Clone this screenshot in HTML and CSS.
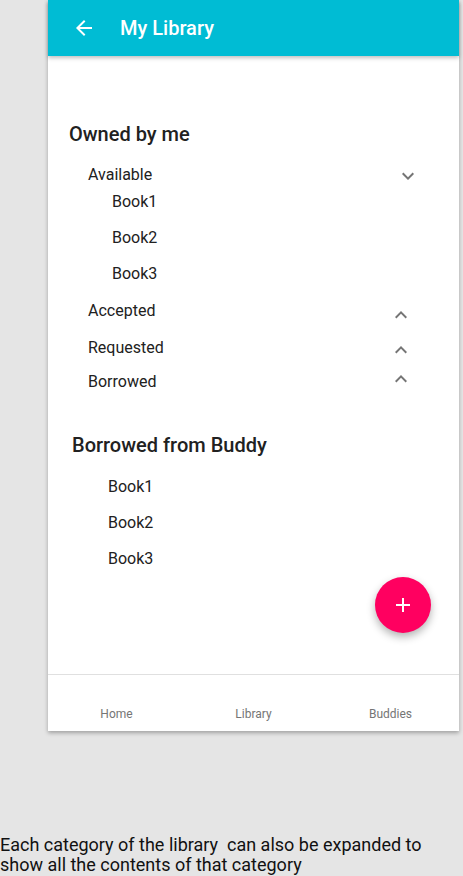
FILE: index.html
```html
<!DOCTYPE html>
<html>
<head>
<meta charset="utf-8">
<link rel="stylesheet" href="styles.css">
</head>
<body>
<div class="phone">
  <header class="appbar">
    <svg class="back" width="24" height="24" viewBox="0 0 24 24"><path fill="#fff" d="M20 11H7.83l5.59-5.59L12 4l-8 8 8 8 1.41-1.41L7.83 13H20v-2z"/></svg>
    <span class="title">My Library</span>
  </header>
  <main class="content">
    <section class="owned">
      <h2 class="heading">Owned by me</h2>
      <div class="cat cat-available">
        <span>Available</span>
        <svg class="chev chev-down" width="24" height="24" viewBox="0 0 24 24"><path fill="#757575" d="M16.59 8.59L12 13.170 7.41 8.59 6 10l6 6 6-6z"/></svg>
      </div>
      <div class="book b1">Book1</div>
      <div class="book">Book2</div>
      <div class="book">Book3</div>
      <div class="cat cat-accepted">
        <span>Accepted</span>
        <svg class="chev chev-up up-a" width="24" height="24" viewBox="0 0 24 24"><path fill="#757575" d="M12 8l-6 6 1.41 1.41L12 10.83l4.59 4.58L18 14z"/></svg>
      </div>
      <div class="cat cat-requested">
        <span>Requested</span>
        <svg class="chev chev-up up-r" width="24" height="24" viewBox="0 0 24 24"><path fill="#757575" d="M12 8l-6 6 1.41 1.41L12 10.83l4.59 4.58L18 14z"/></svg>
      </div>
      <div class="cat cat-borrowed">
        <span>Borrowed</span>
        <svg class="chev chev-up up-b" width="24" height="24" viewBox="0 0 24 24"><path fill="#757575" d="M12 8l-6 6 1.41 1.41L12 10.83l4.59 4.58L18 14z"/></svg>
      </div>
    </section>
    <section class="buddy">
      <h2 class="heading heading-buddy">Borrowed from Buddy</h2>
      <div class="bbook bb1">Book1</div>
      <div class="bbook">Book2</div>
      <div class="bbook">Book3</div>
    </section>
    <button class="fab">
      <svg width="24" height="24" viewBox="0 0 24 24"><path fill="#fff" d="M19 13h-6v6h-2v-6H5v-2h6V5h2v6h6v2z"/></svg>
    </button>
  </main>
  <nav class="bottomnav">
    <span class="navitem">Home</span>
    <span class="navitem">Library</span>
    <span class="navitem">Buddies</span>
  </nav>
</div>
<p class="caption">Each category of the library&nbsp; can also be expanded to show all the contents of that category</p>
</body>
</html>
```
FILE: styles.css
```css
* { box-sizing: border-box; }
html, body { margin: 0; padding: 0; }
body {
  background: #e5e5e5;
  font-family: Roboto, "Noto Sans", sans-serif;
  width: 463px;
  height: 876px;
  overflow: hidden;
}
.phone {
  margin-left: 48px;
  width: 411px;
  height: 731px;
  background: #fff;
  box-shadow: 0 2px 4px rgba(0,0,0,0.3);
  display: flex;
  flex-direction: column;
}
.appbar {
  height: 56px;
  flex: none;
  background: #00bcd4;
  display: flex;
  align-items: center;
  padding-left: 24px;
  box-shadow: 0 2px 4px rgba(0,0,0,0.25);
  position: relative;
  z-index: 1;
}
.back { display: block; }
.title {
  margin-left: 24px;
  color: #fff;
  font-size: 20px;
  font-weight: 500;
}
.content {
  flex: 1;
  position: relative;
  padding-top: 66px;
}
.heading {
  margin: 0 0 0 21px;
  font-size: 20px;
  font-weight: 500;
  line-height: 24px;
  color: #212121;
}
.cat {
  display: flex;
  justify-content: space-between;
  align-items: center;
  height: 24px;
  font-size: 16px;
  color: #212121;
  padding-left: 40px;
}
.cat-available { margin-top: 16px; padding-right: 39px; }
.chev { display: block; }
.chev-down { transform: translateY(2px); }
.cat-accepted { margin-top: 12px; padding-right: 46px; }
.cat-requested { margin-top: 13px; padding-right: 46px; }
.cat-borrowed { margin-top: 10px; padding-right: 46px; }
.up-a { transform: translateY(5px); }
.up-r { transform: translateY(3px); }
.up-b { transform: translateY(-2px); }
.book {
  height: 24px;
  line-height: 24px;
  font-size: 16px;
  color: #212121;
  padding-left: 64px;
  margin-top: 12px;
}
.book.b1 { margin-top: 4px; }
.buddy { margin-top: 40px; }
.heading-buddy { margin-left: 24px; }
.bbook {
  height: 24px;
  line-height: 24px;
  font-size: 16px;
  color: #212121;
  padding-left: 60px;
  margin-top: 12px;
}
.bbook.bb1 { margin-top: 18px; }
.fab {
  position: absolute;
  left: 327px;
  top: 521px;
  width: 56px;
  height: 56px;
  border-radius: 50%;
  border: none;
  padding: 0;
  background: #ff0060;
  box-shadow: 0 4px 8px rgba(0,0,0,0.3);
  display: flex;
  align-items: center;
  justify-content: center;
}
.fab svg { display: block; }
.bottomnav {
  height: 57px;
  flex: none;
  border-top: 1px solid #e0e0e0;
  display: grid;
  grid-template-columns: 1fr 1fr 1fr;
  align-items: end;
  padding-bottom: 10px;
}
.navitem {
  text-align: center;
  font-size: 12px;
  line-height: 14px;
  color: #757575;
}
.caption {
  margin: 104px 0 0 0;
  width: 440px;
  font-size: 18px;
  line-height: 20px;
  color: #111;
}
```
